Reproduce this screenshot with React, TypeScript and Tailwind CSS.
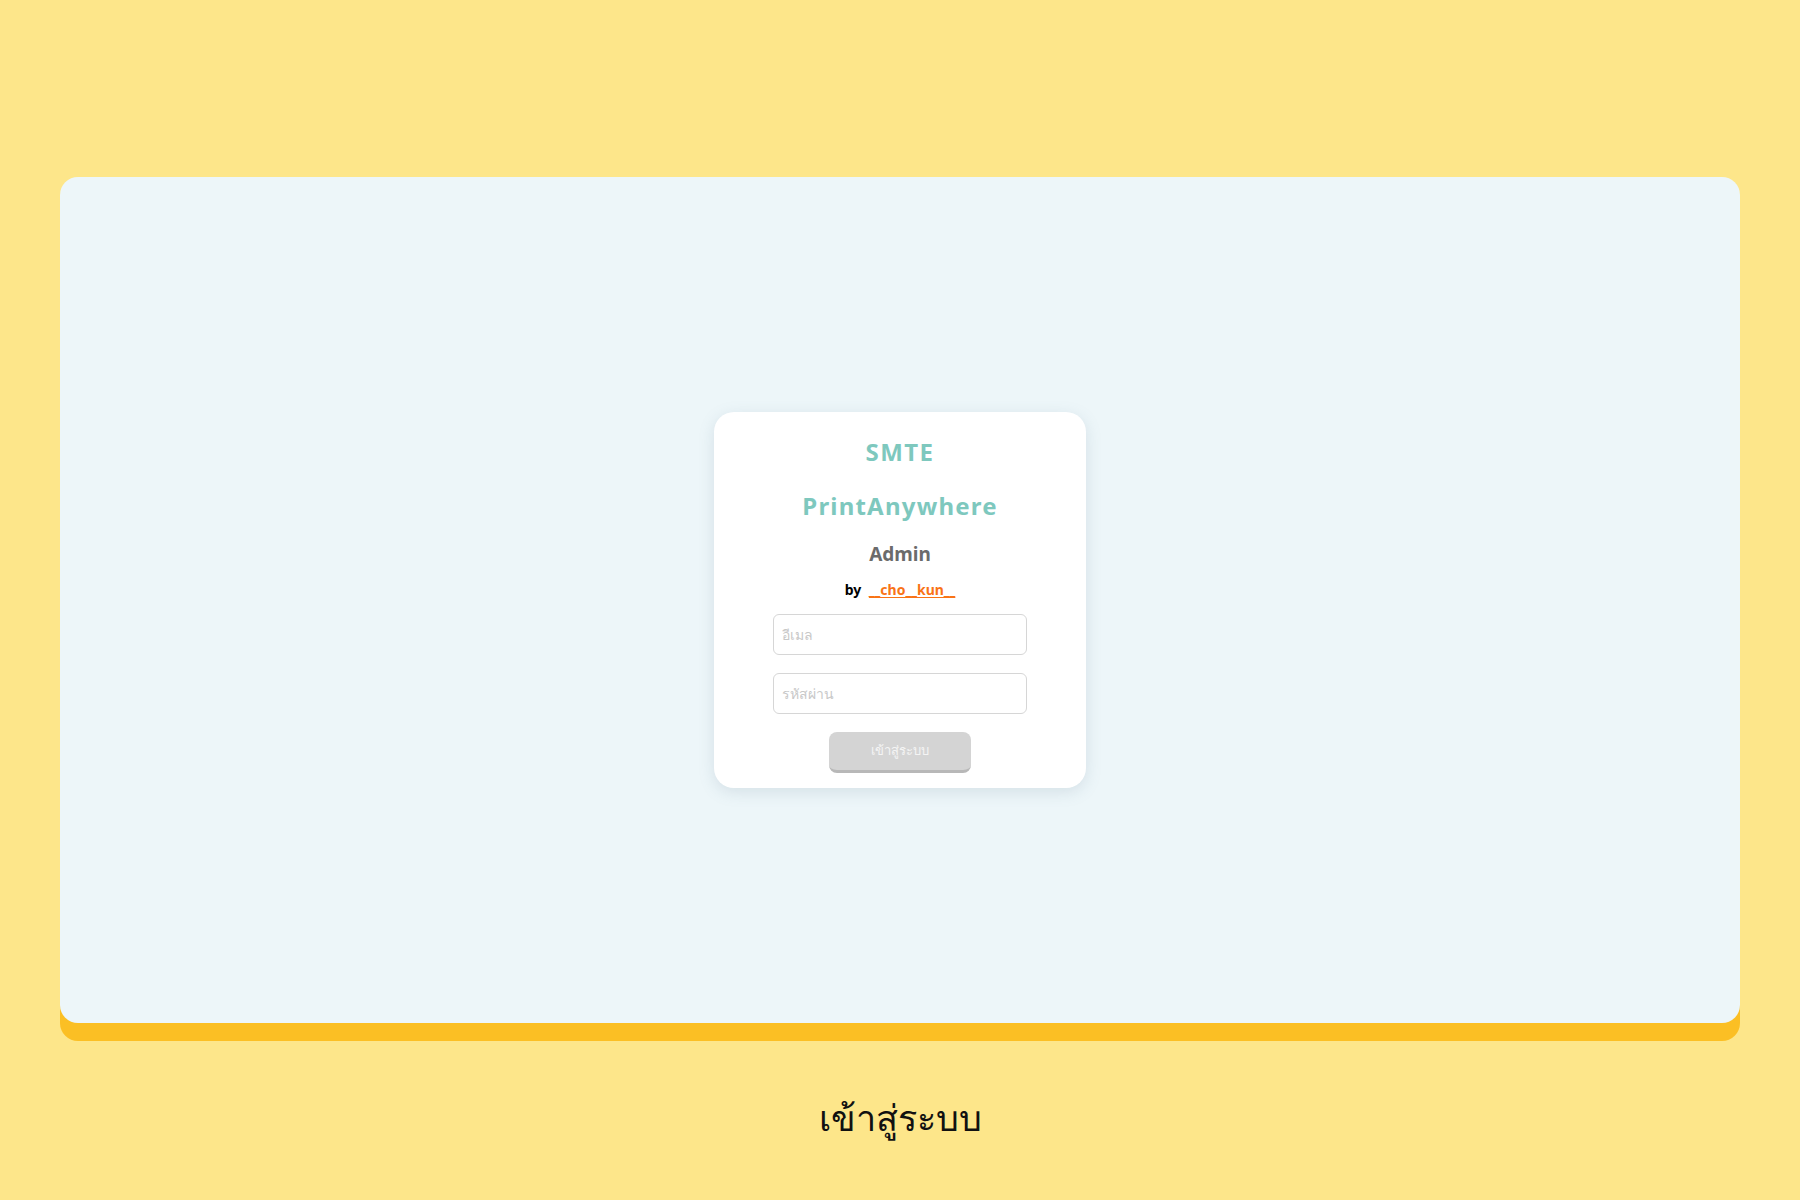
const font = { fontFamily: '"Noto Sans", "Liberation Sans", sans-serif' };

export default function App() {
  return (
    <div
      className="h-screen w-full bg-[#fde68a] px-[60px] pt-[177px] flex flex-col"
      style={font}
    >
      <div className="h-[846px] rounded-[18px] bg-[#edf6f9] shadow-[0_18px_0_#fbbf24] flex items-center justify-center">
        <div className="w-[372px] h-[376px] rounded-[20px] bg-white shadow-[0_4px_16px_rgba(100,130,150,0.18)] flex flex-col items-center pt-[24px]">
          <h1 className="text-[24px] leading-[32px] font-bold tracking-[0.06em] text-[#7ec8be]">SMTE</h1>
          <h2 className="mt-[22px] text-[24px] leading-[32px] font-bold tracking-[0.05em] text-[#7ec8be]">
            PrintAnywhere
          </h2>
          <h3 className="mt-[18px] text-[19px] leading-[28px] font-bold text-[#6b6b6b]">Admin</h3>
          <p className="mt-[12px] text-[14px] leading-[20px] font-bold text-black">
            by{' '}
            <a href="#" className="ml-1 text-[#f97316] underline underline-offset-2">
              __cho__kun__
            </a>
          </p>
          <input
            type="email"
            placeholder="อีเมล"
            className="mt-[14px] w-[254px] h-[41px] rounded-[6px] border border-[#d6d6d6] px-[8px] text-[14px] placeholder:text-[#c8c8c8] outline-none"
          />
          <input
            type="password"
            placeholder="รหัสผ่าน"
            className="mt-[18px] w-[254px] h-[41px] rounded-[6px] border border-[#d6d6d6] px-[8px] text-[14px] placeholder:text-[#c8c8c8] outline-none"
          />
          <button className="mt-[18px] w-[142px] h-[41px] rounded-[8px] bg-[#d4d4d4] border-b-[3px] border-[#b8b8b8] text-[13px] text-[#f4f4f4]">
            เข้าสู่ระบบ
          </button>
        </div>
      </div>
      <div className="flex-1 flex items-center justify-center pt-[12px]">
        <p className="text-[36px] text-[#111111]">เข้าสู่ระบบ</p>
      </div>
    </div>
  );
}
